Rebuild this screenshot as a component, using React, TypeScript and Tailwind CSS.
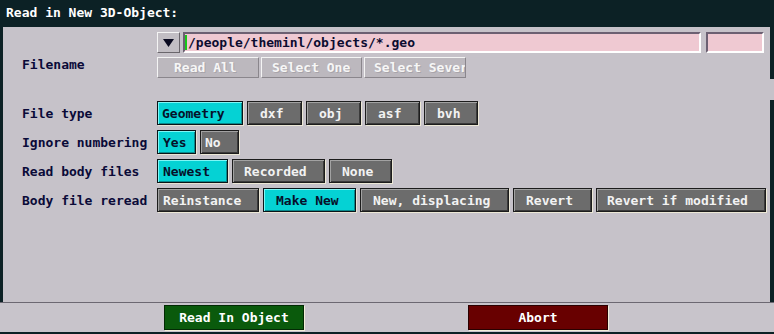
import React from "react";

const mono = "font-['DejaVu_Sans_Mono',monospace] font-bold text-[13px] leading-none";

type BtnProps = { label: string; w: number; pl: number; active?: boolean };

function Btn({ label, w, pl, active }: BtnProps) {
  const cls = active
    ? "bg-[#05d2d4] text-[#06102a] border border-[#0a1418] shadow-[1px_1px_0_#e8e4d4,inset_1px_1px_0_#7ef6f6,inset_-1px_-1px_0_#07898c]"
    : "bg-[#6c6c6c] text-[#f2f2f2] border border-[#1c1c1c] shadow-[1px_1px_0_#ece8d6,inset_1px_1px_0_#a2a2a2,inset_-1px_-1px_0_#3a3a3a]";
  return (
    <div
      className={`${cls} ${mono} h-[24px] flex items-center whitespace-nowrap overflow-hidden shrink-0`}
      style={{ width: w, paddingLeft: pl - 1 }}
    >
      {label}
    </div>
  );
}

function LightBtn({ label, w, pl }: { label: string; w: number; pl: number }) {
  return (
    <div
      className={`bg-[#bcb8be] text-[#f6f6f6] border-t border-l border-t-[#f4f4f4] border-l-[#f4f4f4] border-b border-r border-b-[#8a868c] border-r-[#8a868c] ${mono} h-[21px] flex items-center whitespace-nowrap overflow-hidden shrink-0 [text-shadow:1px_1px_0_#a8a4aa]`}
      style={{ width: w, paddingLeft: pl }}
    >
      {label}
    </div>
  );
}

function Row({ label, children }: { label: string; children: React.ReactNode }) {
  return (
    <div className="flex h-[25px] items-start">
      <div className={`w-[154px] pl-[19px] h-[25px] flex items-center text-[#0a0a38] ${mono} whitespace-nowrap`}>
        {label}
      </div>
      <div className="flex gap-[4px]">{children}</div>
    </div>
  );
}

const bottomFont = "font-['DejaVu_Sans_Mono',monospace] font-bold text-[13px] leading-none";

export default function App() {
  return (
    <div className="w-[774px] h-[334px] bg-[#0c2125] flex flex-col overflow-hidden">
      {/* title */}
      <div className={`h-[27px] shrink-0 flex items-center pl-[6px] pb-[3px] text-white ${mono}`}>
        Read in New 3D-Object:
      </div>

      {/* main */}
      <div className="flex h-[275px] shrink-0">
        <div className="w-[3px] bg-[#0c2125]" />
        <div className="flex-1 bg-[#c6c2c9] pt-[5px]">
          {/* filename block */}
          <div className="flex">
            <div className={`w-[154px] pl-[19px] pt-[26px] text-[#0a0a38] ${mono}`}>Filename</div>
            <div className="flex flex-col gap-[4px]">
              <div className="flex h-[21px]">
                <div className="w-[23px] h-[21px] bg-[#c2bec4] border-t border-l border-t-[#f4f4f4] border-l-[#f4f4f4] border-b border-r border-b-[#6a666c] border-r-[#6a666c] flex items-center justify-center">
                  <svg width="11" height="8" viewBox="0 0 11 8">
                    <polygon points="0,0 11,0 5.5,8" fill="#0a0a20" />
                  </svg>
                </div>
                <div className="ml-[3px] w-[518px] h-[21px] bg-[#efc9d2] border-t-2 border-l-2 border-t-[#6c6072] border-l-[#6c6072] border-b-2 border-r-2 border-b-white border-r-white flex items-center">
                  <div className="w-[2px] h-[15px] bg-[#18c818] mr-[1px]" />
                  <span className={`${mono} text-[#0c0c30]`}>/people/theminl/objects/*.geo</span>
                </div>
                <div className="ml-[5px] w-[58px] h-[21px] bg-[#efc9d2] border-t-2 border-l-2 border-t-[#6c6072] border-l-[#6c6072] border-b-2 border-r-2 border-b-white border-r-white" />
              </div>
              <div className="flex gap-[2px] h-[21px]">
                <LightBtn label="Read All" w={102} pl={16} />
                <LightBtn label="Select One" w={101} pl={10} />
                <LightBtn label="Select Several" w={102} pl={9} />
              </div>
            </div>
          </div>

          <div className="mt-[23px] flex flex-col gap-[4px]">
            <Row label="File type">
              <Btn label="Geometry" w={86} pl={5} active />
              <Btn label="dxf" w={55} pl={13} />
              <Btn label="obj" w={55} pl={13} />
              <Btn label="asf" w={55} pl={13} />
              <Btn label="bvh" w={54} pl={13} />
            </Row>
            <Row label="Ignore numbering">
              <Btn label="Yes" w={39} pl={6} active />
              <Btn label="No" w={39} pl={5} />
            </Row>
            <Row label="Read body files">
              <Btn label="Newest" w={71} pl={6} active />
              <Btn label="Recorded" w={93} pl={12} />
              <Btn label="None" w={63} pl={13} />
            </Row>
            <Row label="Body file reread">
              <Btn label="Reinstance" w={102} pl={6} />
              <Btn label="Make New" w={93} pl={13} active />
              <Btn label="New, displacing" w={149} pl={13} />
              <Btn label="Revert" w={79} pl={13} />
              <Btn label="Revert if modified" w={170} pl={11} />
            </Row>
          </div>
        </div>
        <div className="w-[4px] flex flex-col">
          <div className="h-[52px] bg-[#0c2125]" />
          <div className="h-[21px] bg-[#c6c2c9]" />
          <div className="flex-1 bg-[#0c2125]" />
        </div>
      </div>

      {/* separator */}
      <div className="h-[1px] shrink-0 bg-[#6c6872]" />

      {/* bottom bar */}
      <div className="h-[29px] shrink-0 bg-[#c8c4cb] flex items-start pt-[2px]">
        <div className={`ml-[164px] w-[140px] h-[25px] bg-[#0a5a0c] border border-[#022a04] shadow-[1px_1px_0_#f2eed8] flex items-center justify-center text-white ${bottomFont}`}>
          Read In Object
        </div>
        <div className={`ml-[164px] w-[140px] h-[25px] bg-[#680000] border border-[#2a0000] shadow-[1px_1px_0_#f2eed8] flex items-center justify-center text-white ${bottomFont}`}>
          Abort
        </div>
      </div>
      <div className="flex-1 bg-[#0c2125]" />
    </div>
  );
}
